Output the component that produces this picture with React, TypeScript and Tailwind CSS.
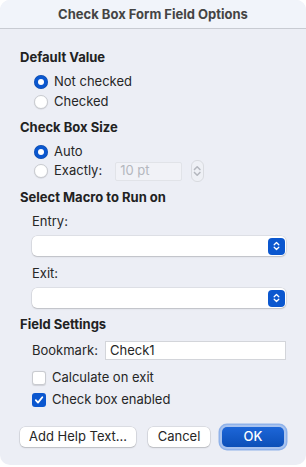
import React from 'react';

const font = { fontFamily: 'Inter, "Noto Sans", "Liberation Sans", sans-serif' };

function Radio({ checked, label }: { checked?: boolean; label: string }) {
  return (
    <div className="flex h-[20px] items-center pl-[14px]">
      {checked ? (
        <span className="flex h-[14px] w-[14px] items-center justify-center rounded-full bg-[#0b57cf] shadow-[inset_0_0_0_0.5px_rgba(0,0,0,0.2)]">
          <span className="h-[6px] w-[6px] rounded-full bg-white" />
        </span>
      ) : (
        <span className="h-[14px] w-[14px] rounded-full border border-[#c9cbd0] bg-white shadow-[0_0.5px_1px_rgba(0,0,0,0.12)]" />
      )}
      <span className="ml-[6px] text-[13px] text-[#262626]">{label}</span>
    </div>
  );
}

function Check({ checked, label }: { checked?: boolean; label: string }) {
  return (
    <div className="flex h-[20px] items-center pl-[12px]">
      {checked ? (
        <span className="flex h-[14px] w-[14px] items-center justify-center rounded-[3px] bg-[#0b57cf]">
          <svg width="10" height="10" viewBox="0 0 10 10">
            <path d="M1.8 5.2 L4 7.6 L8.3 2.2" fill="none" stroke="white" strokeWidth="1.8" strokeLinecap="round" strokeLinejoin="round" />
          </svg>
        </span>
      ) : (
        <span className="h-[14px] w-[14px] rounded-[3px] border border-[#c9cbd0] bg-white shadow-[0_0.5px_1px_rgba(0,0,0,0.12)]" />
      )}
      <span className="ml-[6px] text-[13px] text-[#262626]">{label}</span>
    </div>
  );
}

function Chevrons({ color, size = 10 }: { color: string; size?: number }) {
  return (
    <svg width={size * 0.7} height={size} viewBox="0 0 7 10">
      <path d="M1.2 3.8 L3.5 1.5 L5.8 3.8" fill="none" stroke={color} strokeWidth="1.3" strokeLinecap="round" strokeLinejoin="round" />
      <path d="M1.2 6.2 L3.5 8.5 L5.8 6.2" fill="none" stroke={color} strokeWidth="1.3" strokeLinecap="round" strokeLinejoin="round" />
    </svg>
  );
}

function Select() {
  return (
    <div className="ml-[12px] flex h-[20px] w-[254px] items-center justify-end rounded-[5px] bg-white pr-[1px] shadow-[0_0_0_0.5px_rgba(0,0,0,0.12),0_1px_1.5px_rgba(0,0,0,0.15)]">
      <span className="flex h-[17px] w-[17px] items-center justify-center rounded-[4px] bg-[#0b57cf]">
        <Chevrons color="white" />
      </span>
    </div>
  );
}

function Button({ label, width, primary }: { label: string; width: string; primary?: boolean }) {
  if (primary) {
    return (
      <div className="rounded-[7px] bg-[#a9c3ee] p-[2px] shadow-[0_0_0_1.5px_#8fb2ea]">
        <div className={`${width} flex h-[20px] items-center justify-center rounded-[5px] bg-gradient-to-b from-[#1d66d8] to-[#0b4fb8] text-[13px] font-medium text-white`}>
          {label}
        </div>
      </div>
    );
  }
  return (
    <div className={`${width} flex h-[20px] items-center justify-center rounded-[5px] bg-white text-[13px] text-[#262626] shadow-[0_0_0_0.5px_rgba(0,0,0,0.14),0_1px_1.5px_rgba(0,0,0,0.15)]`}>
      {label}
    </div>
  );
}

export default function App() {
  return (
    <div className="h-[467px] w-[306px] bg-white" style={font}>
      <div className="flex h-[465px] w-[306px] flex-col overflow-hidden rounded-[10px] bg-[#eceef5]">
        <div className="flex h-[29px] items-center justify-center border-b border-[#c8cbd2] bg-[#f1f4fa] pt-[1px] text-[13px] font-bold text-[#444]">
          Check Box Form Field Options
        </div>

        <div className="flex flex-col px-[20px]">
          <div className="mt-[20px] h-[16px] text-[13px] font-bold leading-[16px] text-[#222]">Default Value</div>
          <div className="mt-[7px]">
            <Radio checked label="Not checked" />
            <Radio label="Checked" />
          </div>

          <div className="mt-[7px] h-[16px] text-[13px] font-bold leading-[16px] text-[#222]">Check Box Size</div>
          <div className="mt-[7px]">
            <div className="h-[19px]">
              <Radio checked label="Auto" />
            </div>
            <div className="flex h-[20px] items-center">
              <Radio label="Exactly:" />
              <div className="ml-[13px] flex h-[19px] w-[67px] items-center rounded-[2px] border border-[#e1e3e8] bg-[#f1f2f7] pl-[4px] text-[13px] text-[#b4b7be]">
                10 pt
              </div>
              <div className="ml-[9px] flex h-[22px] w-[13px] items-center justify-center rounded-[6px] border border-[#d9dbe0] bg-[#eef0f5]">
                <Chevrons color="#b4b7be" size={12} />
              </div>
            </div>
          </div>

          <div className="mt-[8px] h-[16px] text-[13px] font-bold leading-[16px] text-[#222]">Select Macro to Run on</div>
          <div className="mt-[8px] h-[16px] pl-[12px] text-[13px] leading-[16px] text-[#262626]">Entry:</div>
          <div className="mt-[7px]">
            <Select />
          </div>
          <div className="mt-[9px] h-[16px] pl-[12px] text-[13px] leading-[16px] text-[#262626]">Exit:</div>
          <div className="mt-[7px]">
            <Select />
          </div>

          <div className="mt-[8px] h-[16px] text-[13px] font-bold leading-[16px] text-[#222]">Field Settings</div>
          <div className="mt-[9px] flex h-[19px] items-center pl-[12px]">
            <span className="text-[13px] text-[#262626]">Bookmark:</span>
            <div className="ml-auto flex h-[19px] w-[181px] items-center border border-[#d3d5da] bg-white pl-[4px] text-[13px] text-[#262626]">
              Check1
            </div>
          </div>
          <div className="mt-[8px]">
            <Check label="Calculate on exit" />
          </div>
          <div className="mt-[2px]">
            <Check checked label="Check box enabled" />
          </div>

          <div className="mt-[15px] flex items-center">
            <Button label="Add Help Text..." width="w-[118px]" />
            <div className="ml-[12px]">
              <Button label="Cancel" width="w-[62px]" />
            </div>
            <div className="ml-[10px]">
              <Button label="OK" width="w-[62px]" primary />
            </div>
          </div>
        </div>
      </div>
    </div>
  );
}
